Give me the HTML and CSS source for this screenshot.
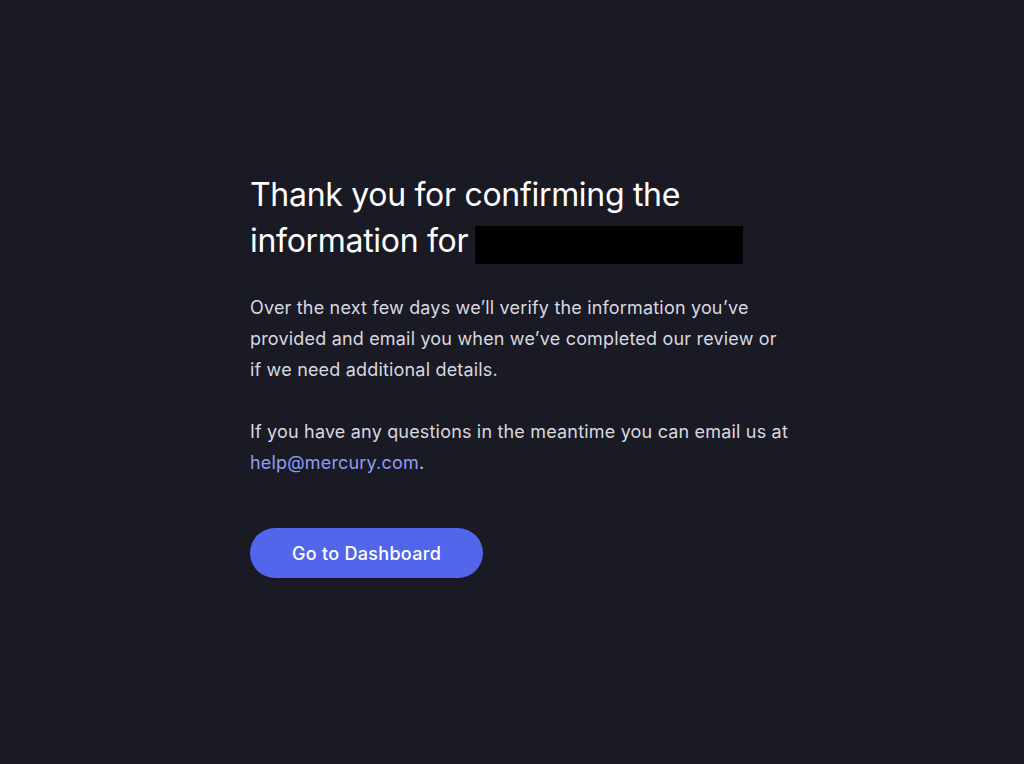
FILE: index.html
```html
<!DOCTYPE html>
<html lang="en">
<head>
<meta charset="utf-8">
<link rel="stylesheet" href="styles.css">
</head>
<body>
<main class="page">
  <section class="content">
    <h1 class="title">Thank you for confirming the information for <span class="redacted"></span></h1>
    <p class="text">Over the next few days we’ll verify the information you’ve provided and email you when we’ve completed our review or if we need additional details.</p>
    <p class="text">If you have any questions in the meantime you can email us at <a class="link" href="#">help@mercury.com</a>.</p>
    <button class="btn" type="button">Go to Dashboard</button>
  </section>
</main>
</body>
</html>
```

FILE: styles.css
```css
html, body {
  margin: 0;
  padding: 0;
  background: #1a1a24;
  height: 100%;
}
body {
  font-family: Inter, "Noto Sans", sans-serif;
  color: #e4e4ea;
}
.page {
  display: flex;
  justify-content: flex-start;
  padding: 172px 0 0 250px;
}
.content {
  width: 540px;
  display: flex;
  flex-direction: column;
  align-items: flex-start;
}
.title {
  margin: 0;
  font-size: 32px;
  font-weight: 400;
  line-height: 46px;
  color: #ffffff;
  letter-spacing: -0.3px;
  width: 520px;
}
.redacted {
  display: inline-block;
  width: 268px;
  height: 38px;
  margin-left: -2px;
  background: #000;
  vertical-align: -12px;
}
.text {
  margin: 28px 0 0;
  font-size: 18px;
  letter-spacing: 0.18px;
  line-height: 31px;
  color: #d8d8e0;
}
.text + .text {
  margin-top: 31px;
}
.link {
  color: #8e9cf3;
  text-decoration: none;
}
.btn {
  margin-top: 50px;
  height: 50px;
  width: 233px;
  border: none;
  border-radius: 25px;
  background: #5266eb;
  color: #fff;
  font-family: inherit;
  font-size: 18px;
  letter-spacing: 0.3px;
  font-weight: 500;
  cursor: pointer;
}
```
